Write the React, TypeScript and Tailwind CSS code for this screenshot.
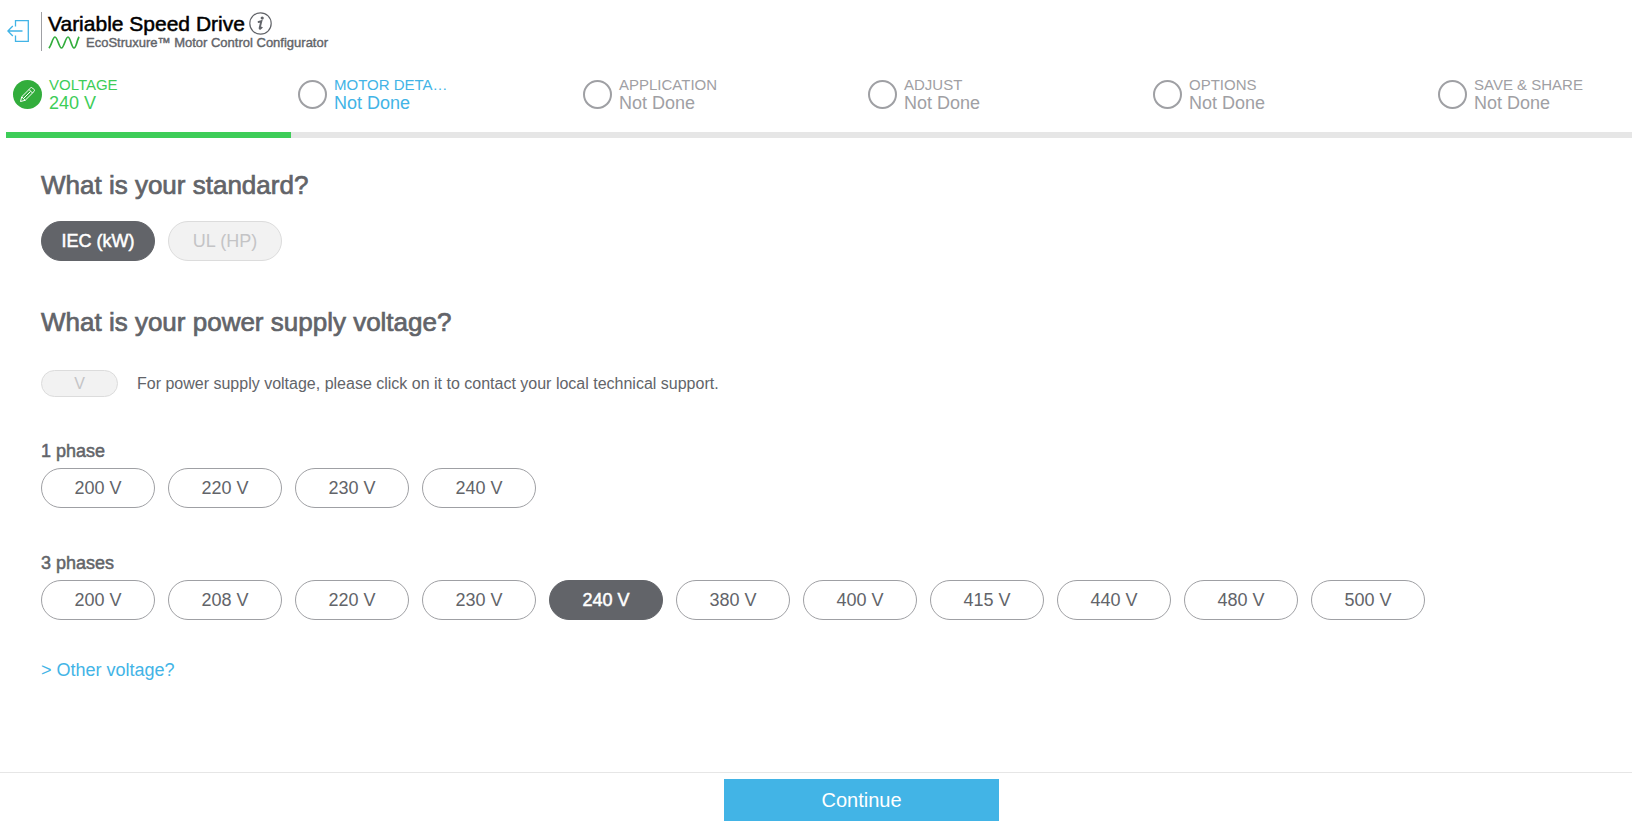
import React, { useState } from "react";

interface Step {
    label: string;
    value: string;
    state: "done" | "next" | "todo";
}

const steps: Step[] = [
    { label: "VOLTAGE", value: "240 V", state: "done" },
    { label: "MOTOR DETA…", value: "Not Done", state: "next" },
    { label: "APPLICATION", value: "Not Done", state: "todo" },
    { label: "ADJUST", value: "Not Done", state: "todo" },
    { label: "OPTIONS", value: "Not Done", state: "todo" },
    { label: "SAVE & SHARE", value: "Not Done", state: "todo" },
];

const onePhase = ["200 V", "220 V", "230 V", "240 V"];
const threePhases = ["200 V", "208 V", "220 V", "230 V", "240 V", "380 V", "400 V", "415 V", "440 V", "480 V", "500 V"];

const stepColors = {
    done: "text-[#3dcd58]",
    next: "text-[#42b4e6]",
    todo: "text-[#9fa0a4]",
};

function ExitIcon() {
    return (
        <svg width="22" height="22" viewBox="0 0 22 22" fill="none" stroke="#42b4e6" strokeWidth="1.3">
            <path d="M8.5 6.5V.7h12.8v20.6H8.5v-5.8" />
            <path d="M15.5 11H1M5.8 6L.9 11l4.9 5" />
        </svg>
    );
}

function InfoIcon() {
    return (
        <svg width="23" height="23" viewBox="0 0 23 23" fill="none">
            <circle cx="11.5" cy="11.5" r="10.7" stroke="#626469" strokeWidth="1.2" />
            <circle cx="13.2" cy="6" r="1.6" fill="#626469" />
            <path d="M8.8 10.100c1.300-.2 2.500-.6 3.600-1L10.700 15.800c-.4 1.500.9 1.200 2.500-.8" stroke="#626469" strokeWidth="1.9" />
        </svg>
    );
}

function WaveIcon() {
    return (
        <svg width="32" height="13" viewBox="0 0 32 13" fill="none" stroke="#32ad3c" strokeWidth="1.7">
            <path d="M.8 12C3.5 10 4.500 1 7 1s4 11 6.500 11S17.500 1 20 1s3.500 11 6 11S29 3 31.200 1" />
        </svg>
    );
}

function PencilIcon() {
    return (
        <svg width="17" height="17" viewBox="0 0 17 17" fill="none" stroke="#fff" strokeWidth="1" strokeLinejoin="round">
            <path d="M1.500 15.500l1.200-4.700L11.500 2q1-1 2 0l1.500 1.500q1 1 0 2L6.200 14.300z" />
            <path d="M10 3.500L13.500 7M2.700 10.800l3.500 3.500M4.500 12.500l7-7" />
        </svg>
    );
}

function Pill({ label, selected, onClick }: { label: string; selected?: boolean; onClick: () => void }) {
    return (
        <button
            onClick={onClick}
            className={
                selected
                    ? "w-[114px] h-10 rounded-[20px] border border-[#626469] bg-[#626469] text-white text-lg [-webkit-text-stroke:0.5px]"
                    : "w-[114px] h-10 rounded-[20px] border border-[#9fa0a4] bg-white text-[#626469] text-lg"
            }
        >
            {label}
        </button>
    );
}

export default function App() {
    const [selected, setSelected] = useState("3-240 V");

    return (
        <div className="min-h-screen flex flex-col overflow-x-hidden bg-white text-[#626469] font-['Liberation_Sans',Arial,sans-serif]">
            {/* Header */}
            <header className="flex items-center h-[62px] pl-[7px]">
                <button aria-label="Exit">
                    <ExitIcon />
                </button>
                <div className="ml-3 pl-1.5 h-[39px] border-l border-[#9fa0a4] flex flex-col">
                    <div className="flex items-center gap-1 h-[23px]">
                        <h1 className="text-[21px] leading-[23px] text-black [-webkit-text-stroke:0.5px]">Variable Speed Drive</h1>
                        <button aria-label="Information">
                            <InfoIcon />
                        </button>
                    </div>
                    <div className="flex items-center gap-1.5 h-4">
                        <WaveIcon />
                        <p className="text-[13px] leading-4 [-webkit-text-stroke:0.4px]">EcoStruxure™ Motor Control Configurator</p>
                    </div>
                </div>
            </header>

            {/* Steps */}
            <nav className="ml-1.5 flex overflow-hidden">
                {steps.map((step) => (
                    <div
                        key={step.label}
                        className={
                            step.state === "done"
                                ? "w-[285px] h-19 shrink-0 pt-3.5 border-b-6 border-[#3dcd58]"
                                : "w-[285px] h-19 shrink-0 pt-3.5 border-b-6 border-[#e6e6e6]"
                        }
                    >
                        <button className="flex items-center gap-[7px] pl-[7px] text-left">
                            {step.state === "done" ? (
                                <span className="size-[29px] rounded-full bg-[#32ad3c] flex items-center justify-center">
                                    <PencilIcon />
                                </span>
                            ) : (
                                <span className="size-[29px] rounded-full border-2 border-[#9fa0a4]" />
                            )}
                            <span className={stepColors[step.state]}>
                                <span className="block text-[15px] leading-[18px] whitespace-nowrap">{step.label}</span>
                                <span className="block text-lg leading-[18px]">{step.value}</span>
                            </span>
                        </button>
                    </div>
                ))}
            </nav>

            {/* Questions */}
            <main className="flex-1 px-[41px] pt-[31px]">
                <h2 className="text-[26px] leading-8 [-webkit-text-stroke:0.7px]">What is your standard?</h2>
                <div className="flex gap-[13px] mt-5">
                    <Pill label="IEC (kW)" selected onClick={() => {}} />
                    <button disabled className="w-[114px] h-10 rounded-[20px] border border-[#dcdcdc] bg-[#f2f2f2] text-[#c4c4c6] text-lg">
                        UL (HP)
                    </button>
                </div>

                <h2 className="mt-[45px] text-[26px] leading-8 [-webkit-text-stroke:0.7px]">What is your power supply voltage?</h2>
                <div className="flex items-center gap-[19px] mt-8">
                    <button disabled className="w-[77px] h-[27px] rounded-[14px] border border-[#dcdcdc] bg-[#f2f2f2] text-[#c4c4c6] text-base leading-6">
                        V
                    </button>
                    <p className="text-base leading-6">For power supply voltage, please click on it to contact your local technical support.</p>
                </div>

                <h3 className="mt-[42px] text-lg leading-6 [-webkit-text-stroke:0.5px]">1 phase</h3>
                <div className="flex flex-wrap gap-[13px] mt-[5px]">
                    {onePhase.map((v) => (
                        <Pill key={v} label={v} selected={selected === `1-${v}`} onClick={() => setSelected(`1-${v}`)} />
                    ))}
                </div>

                <h3 className="mt-[43px] text-lg leading-6 [-webkit-text-stroke:0.5px]">3 phases</h3>
                <div className="flex flex-wrap gap-[13px] mt-[5px]">
                    {threePhases.map((v) => (
                        <Pill key={v} label={v} selected={selected === `3-${v}`} onClick={() => setSelected(`3-${v}`)} />
                    ))}
                </div>

                <a href="#" className="inline-block mt-[38px] text-lg leading-6 text-[#42b4e6]">
                    &gt; Other voltage?
                </a>
            </main>

            {/* Footer */}
            <footer className="flex justify-center border-t border-[#e6e6e6] pt-1.5 pb-1 pl-[91px]">
                <button className="w-[275px] h-[42px] bg-[#42b4e6] text-white text-xl">Continue</button>
            </footer>
        </div>
    );
}
